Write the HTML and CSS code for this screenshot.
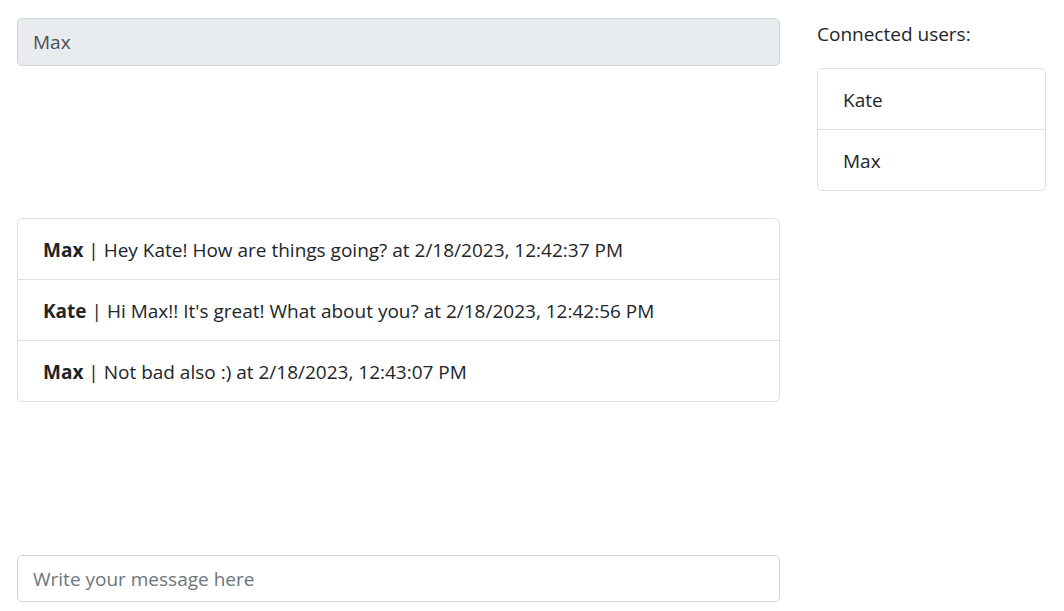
FILE: index.html
```html
<!DOCTYPE html>
<html lang="en">
<head>
<meta charset="utf-8">
<title>Chat</title>
<link rel="stylesheet" href="styles.css">
</head>
<body>
<div class="page">
  <div class="main">
    <input class="form-control name-input" type="text" value="Max" readonly>
    <ul class="list-group messages">
      <li class="list-group-item"><strong>Max</strong> | Hey Kate! How are things going? at 2/18/2023, 12:42:37 PM</li>
      <li class="list-group-item"><strong>Kate</strong> | Hi Max!! It's great! What about you? at 2/18/2023, 12:42:56 PM</li>
      <li class="list-group-item"><strong>Max</strong> | Not bad also :) at 2/18/2023, 12:43:07 PM</li>
    </ul>
    <input class="form-control message-input" type="text" placeholder="Write your message here">
  </div>
  <div class="side">
    <p class="side-title">Connected users:</p>
    <ul class="list-group">
      <li class="list-group-item">Kate</li>
      <li class="list-group-item">Max</li>
    </ul>
  </div>
</div>
</body>
</html>
```
FILE: styles.css
```css
html, body {
  margin: 0;
  padding: 0;
  background: #fff;
}
body {
  font-family: "Open Sans", "Noto Sans", sans-serif;
  font-size: 19px;
  line-height: 30px;
  color: #212529;
}
.page {
  display: flex;
  gap: 37px;
  padding: 18px 18px 0 17px;
}
.main {
  width: 763px;
  display: flex;
  flex-direction: column;
}
.side {
  width: 229px;
}
.form-control {
  box-sizing: border-box;
  display: block;
  width: 100%;
  height: 48px;
  padding: 7px 15px;
  font: inherit;
  color: #495057;
  background: #fff;
  border: 1px solid #ced4da;
  border-radius: 5px;
  outline: none;
}
.form-control::placeholder {
  color: #6c757d;
  opacity: 1;
}
.list-group {
  list-style: none;
  margin: 0;
  padding: 0;
  border: 1px solid #dfdfdf;
  border-radius: 5px;
}
.list-group-item {
  padding: 16px 25px 14px;
  line-height: 30px;
}
.list-group-item + .list-group-item {
  border-top: 1px solid #dfdfdf;
}
.list-group-item strong {
  font-weight: 700;
}
.main .name-input {
  background: #e9ecef;
}
.main .messages {
  margin-top: 152px;
}
.main .message-input {
  margin-top: 153px;
  height: 47px;
}
.side-title {
  margin: 1px 0 19px;
}
```
